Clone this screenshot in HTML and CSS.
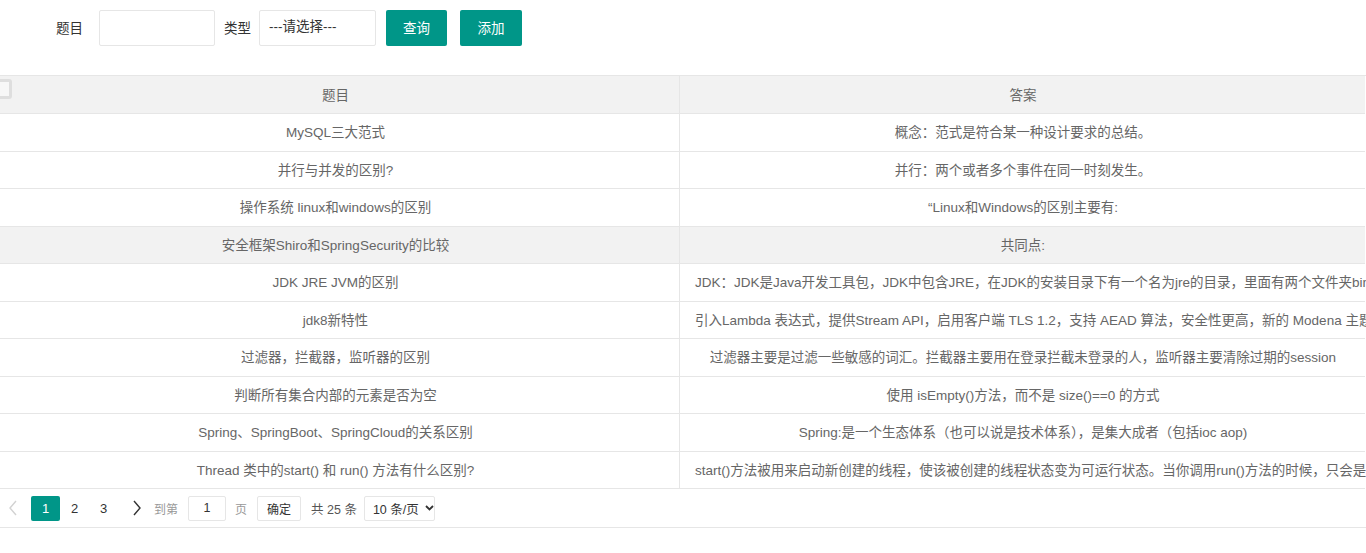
FILE: index.html
```html
<!DOCTYPE html>
<html lang="zh-CN">
<head>
<meta charset="utf-8">
<title>题目管理</title>
<link rel="stylesheet" href="styles.css">
</head>
<body>
<form class="search">
  <label class="lbl">题目</label>
  <div class="input"></div>
  <label class="lbl lbl-2">类型</label>
  <div class="input select">---请选择---</div>
  <button type="button" class="btn btn-query">查询</button>
  <button type="button" class="btn btn-add">添加</button>
</form>

<div class="table-wrap">
  <div class="grid">
    <div class="row head">
      <div class="cell c1"><span class="chk"></span>题目</div>
      <div class="cell c2">答案</div>
    </div>
    <div class="row">
      <div class="cell c1">MySQL三大范式</div>
      <div class="cell c2">概念：范式是符合某一种设计要求的总结。</div>
    </div>
    <div class="row">
      <div class="cell c1">并行与并发的区别?</div>
      <div class="cell c2">并行：两个或者多个事件在同一时刻发生。</div>
    </div>
    <div class="row">
      <div class="cell c1">操作系统 linux和windows的区别</div>
      <div class="cell c2">“Linux和Windows的区别主要有:</div>
    </div>
    <div class="row hover">
      <div class="cell c1">安全框架Shiro和SpringSecurity的比较</div>
      <div class="cell c2">共同点:</div>
    </div>
    <div class="row">
      <div class="cell c1">JDK JRE JVM的区别</div>
      <div class="cell c2">JDK：JDK是Java开发工具包，JDK中包含JRE，在JDK的安装目录下有一个名为jre的目录，里面有两个文件夹bin和lib，在这里bin里就是jvm，lib中是jvm工作所需要的类库</div>
    </div>
    <div class="row">
      <div class="cell c1">jdk8新特性</div>
      <div class="cell c2">引入Lambda 表达式，提供Stream API，启用客户端 TLS 1.2，支持 AEAD 算法，安全性更高，新的 Modena 主题，新的日期时间 API</div>
    </div>
    <div class="row">
      <div class="cell c1">过滤器，拦截器，监听器的区别</div>
      <div class="cell c2">过滤器主要是过滤一些敏感的词汇。拦截器主要用在登录拦截未登录的人，监听器主要清除过期的session</div>
    </div>
    <div class="row">
      <div class="cell c1">判断所有集合内部的元素是否为空</div>
      <div class="cell c2">使用 isEmpty()方法，而不是 size()==0 的方式</div>
    </div>
    <div class="row">
      <div class="cell c1">Spring、SpringBoot、SpringCloud的关系区别</div>
      <div class="cell c2">Spring:是一个生态体系（也可以说是技术体系），是集大成者（包括ioc aop)</div>
    </div>
    <div class="row">
      <div class="cell c1">Thread 类中的start() 和 run() 方法有什么区别?</div>
      <div class="cell c2">start()方法被用来启动新创建的线程，使该被创建的线程状态变为可运行状态。当你调用run()方法的时候，只会是在原来的线程中调用，没有新的线程启动</div>
    </div>
  </div>
</div>

<div class="pager">
  <span class="pg-arrow prev">
    <svg width="8" height="16" viewBox="0 0 8 16"><polyline points="7,1 1,8 7,15" fill="none" stroke="#d2d2d2" stroke-width="1.4"/></svg>
  </span>
  <span class="pg-num cur">1</span>
  <span class="pg-num">2</span>
  <span class="pg-num">3</span>
  <span class="pg-arrow next">
    <svg width="8" height="16" viewBox="0 0 8 16"><polyline points="1,1 7,8 1,15" fill="none" stroke="#333" stroke-width="1.4"/></svg>
  </span>
  <span class="pg-txt pg-goto">到第</span>
  <span class="pg-input">1</span>
  <span class="pg-txt pg-page">页</span>
  <span class="pg-btn">确定</span>
  <span class="pg-count">共 25 条</span>
  <span class="pg-select">10 条/页
    <svg width="9" height="6" viewBox="0 0 9 6"><polyline points="1,1 4.5,4.5 8,1" fill="none" stroke="#333" stroke-width="1.8"/></svg>
  </span>
</div>
</body>
</html>
```

FILE: styles.css
```css
html, body {
  margin: 0;
  padding: 0;
  background: #fff;
}

body {
  width: 1366px;
  overflow: hidden;
  font-family: "Liberation Sans", "Noto Sans CJK SC", sans-serif;
  font-size: 13.5px;
  color: #666;
}

/* search bar */
.search {
  display: flex;
  align-items: center;
  margin: 0;
  padding: 10px 0 0 56px;
  height: 36px;
}

.lbl {
  color: #333;
  font-size: 13.5px;
  margin-right: 16px;
  margin-top: -2px;
}

.lbl-2 {
  margin-left: 9px;
  margin-right: 8px;
}

.input {
  box-sizing: border-box;
  width: 116px;
  height: 36px;
  border: 1px solid #e6e6e6;
  border-radius: 2px;
  background: #fff;
}

.select {
  width: 117px;
  padding-left: 9px;
  line-height: 32px;
  color: #333;
  font-size: 13.5px;
}

.btn {
  box-sizing: border-box;
  height: 36px;
  border: 0;
  border-radius: 2px;
  background: #009688;
  color: #fff;
  font-family: inherit;
  font-size: 13.5px;
  padding: 0 0 3px;
  cursor: pointer;
}

.btn-query {
  width: 61px;
  margin-left: 10px;
}

.btn-add {
  width: 62px;
  margin-left: 13px;
}

/* table */
.table-wrap {
  margin-top: 29px;
  border-top: 1px solid #e6e6e6;
  overflow: hidden;
}

.grid {
  margin-left: -8px;
  width: 1373px;
}

.row {
  display: grid;
  grid-template-columns: 688px 686px;
  box-sizing: border-box;
  height: 37.5px;
  border-bottom: 1px solid #e6e6e6;
}

.row.head {
  height: 38px;
  background: #f2f2f2;
}

.row.hover {
  background: #f2f2f2;
}

.cell {
  box-sizing: border-box;
  padding: 0 15px 2px;
  display: flex;
  align-items: center;
  justify-content: safe center;
  white-space: nowrap;
  overflow: hidden;
  font-size: 13.5px;
  color: #666;
}

.c1 {
  border-right: 1px solid #e6e6e6;
  position: relative;
}

.chk {
  position: absolute;
  left: 0;
  top: 3px;
  width: 20px;
  height: 20px;
  box-sizing: border-box;
  border: 3px solid #dedede;
  border-radius: 3px;
  background: #f7f7f7;
}

/* pager */
.pager {
  display: flex;
  align-items: center;
  box-sizing: border-box;
  height: 39px;
  border-bottom: 1px solid #e6e6e6;
  font-size: 12px;
  color: #333;
}

.pg-arrow {
  display: flex;
  align-items: center;
  justify-content: center;
  width: 29px;
  height: 25px;
}

.prev {
  width: 25px;
}

.pg-num {
  display: flex;
  align-items: center;
  justify-content: center;
  width: 29px;
  height: 25px;
  font-size: 13px;
  color: #333;
}

.pg-num.cur {
  margin-left: 6px;
  background: #009688;
  color: #fff;
  border-radius: 2px;
}

.next {
  margin-left: 4px;
}

.pg-txt {
  color: #999;
  font-size: 12px;
}

.pg-goto {
  margin-left: 3px;
}

.pg-input {
  box-sizing: border-box;
  display: flex;
  align-items: center;
  justify-content: center;
  margin-left: 10px;
  width: 38px;
  height: 25px;
  border: 1px solid #e6e6e6;
  border-radius: 2px;
  font-size: 12.5px;
  color: #333;
}

.pg-page {
  margin-left: 9px;
}

.pg-btn {
  box-sizing: border-box;
  display: flex;
  align-items: center;
  justify-content: center;
  margin-left: 10px;
  width: 44px;
  height: 25px;
  border: 1px solid #e6e6e6;
  border-radius: 2px;
  font-size: 12px;
  color: #333;
}

.pg-count {
  margin-left: 10px;
  font-size: 12.5px;
  color: #555;
}

.pg-select {
  box-sizing: border-box;
  display: flex;
  align-items: center;
  gap: 6px;
  margin-left: 7px;
  padding-left: 8px;
  width: 71px;
  height: 25px;
  border: 1px solid #e6e6e6;
  border-radius: 2px;
  font-size: 12.5px;
  color: #333;
}
```
